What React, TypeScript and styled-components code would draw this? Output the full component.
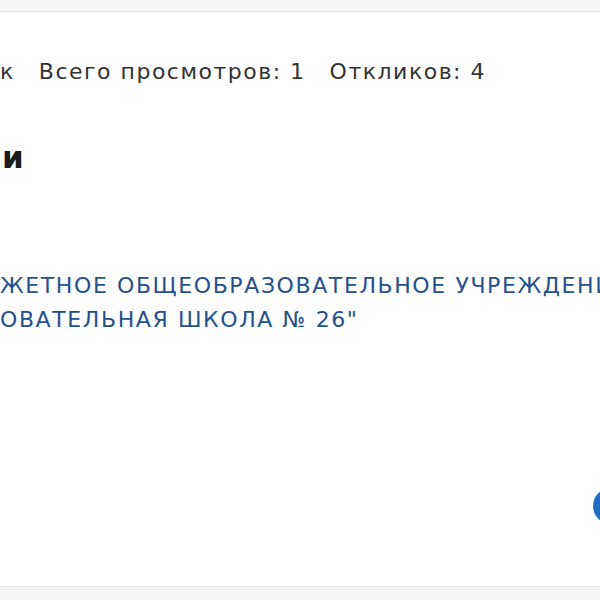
import React from "react";
import styled, { createGlobalStyle } from "styled-components";

const Global = createGlobalStyle`
  html, body { margin: 0; padding: 0; background: #f6f6f6; }
  body { width: 600px; height: 600px; overflow: hidden; font-family: "DejaVu Sans", "Noto Sans", sans-serif; }
`;

const Card = styled.section`
  margin-top: 11px;
  height: 574px;
  background: #ffffff;
  border-top: 1px solid #e4e4e4;
  border-bottom: 1px solid #e4e4e4;
  overflow: hidden;
  position: relative;
  display: flex;
  flex-direction: column;
`;

const Stats = styled.div`
  display: flex;
  gap: 24px;
  padding-top: 46px;
  font-size: 22px;
  line-height: 28px;
  letter-spacing: 1.5px;
  color: #333333;
  white-space: nowrap;
`;

const Heading = styled.h2`
  margin: 51px 0 0 2px;
  font-size: 31px;
  line-height: 40px;
  font-weight: 700;
  color: #1b1b1b;
`;

const Org = styled.a`
  display: block;
  margin-top: 92px;
  font-size: 22px;
  line-height: 34px;
  letter-spacing: 1.6px;
  color: #25508e;
  text-decoration: none;
  white-space: nowrap;
`;

const Line = styled.span`
  display: block;
`;

const RoundButton = styled.button`
  position: absolute;
  left: 593px;
  top: 476px;
  width: 36px;
  height: 36px;
  border-radius: 50%;
  border: none;
  background: #1f6fc2;
  padding: 0;
`;

export default function App() {
  return (
    <>
      <Global />
      <Card>
        <Stats>
          <span>к</span>
          <span>Всего просмотров: 1</span>
          <span>Откликов: 4</span>
        </Stats>
        <Heading>и</Heading>
        <Org href="#">
          <Line>ЖЕТНОЕ ОБЩЕОБРАЗОВАТЕЛЬНОЕ УЧРЕЖДЕНИЕ "СРЕДНЯЯ ОБЩЕОБР</Line>
          <Line>ОВАТЕЛЬНАЯ ШКОЛА № 26"</Line>
        </Org>
        <RoundButton aria-label="Действие" />
      </Card>
    </>
  );
}
